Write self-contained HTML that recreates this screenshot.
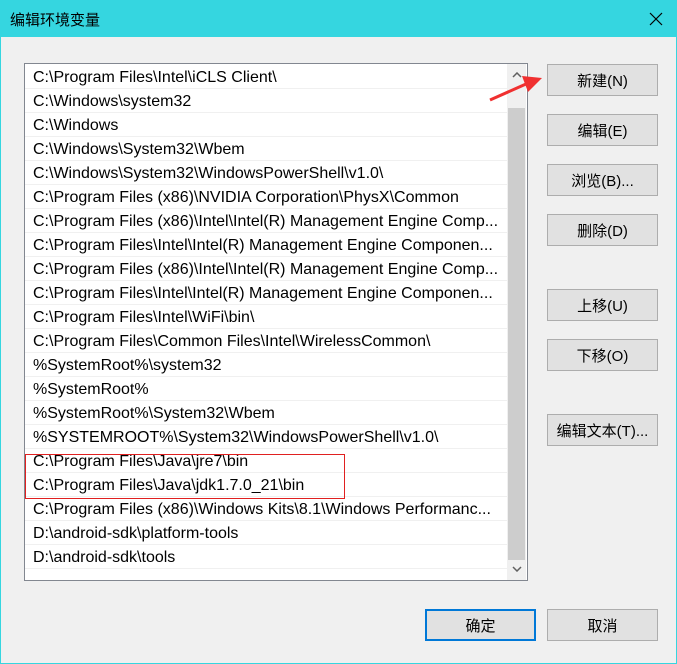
<!DOCTYPE html>
<html><head><meta charset="utf-8"><style>
*{margin:0;padding:0;box-sizing:border-box}
body{width:677px;height:664px;background:#f0f0f0;position:relative;overflow:hidden;font-family:"Liberation Sans","Noto Sans CJK SC",sans-serif;font-size:15px;color:#000}
.frame{position:absolute;left:0;top:0;width:677px;height:664px;border:1px solid #35d6e0}
.title{position:absolute;left:0;top:0;width:677px;height:37px;background:#35d6e0}
.title span{position:absolute;left:10px;top:9px;font-size:15px}
.list{position:absolute;left:24px;top:63px;width:504px;height:518px;background:#fff;border:1px solid #828790}
.row{position:absolute;left:0;width:482px;height:24px;border-bottom:1px solid #f0f0f0;padding-left:8px;line-height:26px;white-space:nowrap;overflow:hidden;font-size:16px}
.sb{position:absolute;left:482px;top:0;width:19px;height:516px;background:#f0f0f0}
.thumb{position:absolute;left:1px;top:44px;width:17px;height:452px;background:#cdcdcd}
.btn{position:absolute;width:111px;height:32px;background:#e1e1e1;border:1px solid #adadad;text-align:center;line-height:33px;font-size:15px}
.red{position:absolute;left:25px;top:454px;width:320px;height:45px;border:1px solid #e02020}
</style></head><body>
<div class="frame"></div>
<div class="title"><span>编辑环境变量</span>
<svg style="position:absolute;left:649px;top:12px" width="14" height="14"><path d="M1 1L13 13M13 1L1 13" stroke="#000" stroke-width="1.2"/></svg></div>
<div class="list">
<div class="row" style="top:1px">C:\Program Files\Intel\iCLS Client\</div>
<div class="row" style="top:25px">C:\Windows\system32</div>
<div class="row" style="top:49px">C:\Windows</div>
<div class="row" style="top:73px">C:\Windows\System32\Wbem</div>
<div class="row" style="top:97px">C:\Windows\System32\WindowsPowerShell\v1.0\</div>
<div class="row" style="top:121px">C:\Program Files (x86)\NVIDIA Corporation\PhysX\Common</div>
<div class="row" style="top:145px">C:\Program Files (x86)\Intel\Intel(R) Management Engine Comp...</div>
<div class="row" style="top:169px">C:\Program Files\Intel\Intel(R) Management Engine Componen...</div>
<div class="row" style="top:193px">C:\Program Files (x86)\Intel\Intel(R) Management Engine Comp...</div>
<div class="row" style="top:217px">C:\Program Files\Intel\Intel(R) Management Engine Componen...</div>
<div class="row" style="top:241px">C:\Program Files\Intel\WiFi\bin\</div>
<div class="row" style="top:265px">C:\Program Files\Common Files\Intel\WirelessCommon\</div>
<div class="row" style="top:289px">%SystemRoot%\system32</div>
<div class="row" style="top:313px">%SystemRoot%</div>
<div class="row" style="top:337px">%SystemRoot%\System32\Wbem</div>
<div class="row" style="top:361px">%SYSTEMROOT%\System32\WindowsPowerShell\v1.0\</div>
<div class="row" style="top:385px">C:\Program Files\Java\jre7\bin</div>
<div class="row" style="top:409px">C:\Program Files\Java\jdk1.7.0_21\bin</div>
<div class="row" style="top:433px">C:\Program Files (x86)\Windows Kits\8.1\Windows Performanc...</div>
<div class="row" style="top:457px">D:\android-sdk\platform-tools</div>
<div class="row" style="top:481px">D:\android-sdk\tools</div>
<div class="sb"><div class="thumb"></div>
<svg style="position:absolute;left:5px;top:8px" width="10" height="6"><path d="M1 5L5 1L9 5" stroke="#606060" stroke-width="1.5" fill="none"/></svg>
<svg style="position:absolute;left:5px;top:502px" width="10" height="6"><path d="M1 1L5 5L9 1" stroke="#606060" stroke-width="1.5" fill="none"/></svg>
</div>
</div>
<div class="red"></div>
<svg style="position:absolute;left:486px;top:70px" width="60" height="34"><path d="M4 30L40 14" stroke="#f03030" stroke-width="3"/><path d="M36 6L56 8L42 22Z" fill="#f03030"/></svg>
<div class="btn" style="left:547px;top:64px">新建(N)</div>
<div class="btn" style="left:547px;top:114px">编辑(E)</div>
<div class="btn" style="left:547px;top:164px">浏览(B)...</div>
<div class="btn" style="left:547px;top:214px">删除(D)</div>
<div class="btn" style="left:547px;top:289px">上移(U)</div>
<div class="btn" style="left:547px;top:339px">下移(O)</div>
<div class="btn" style="left:547px;top:414px">编辑文本(T)...</div>
<div class="btn" style="left:425px;top:609px;border:2px solid #0078d7;line-height:31px">确定</div>
<div class="btn" style="left:547px;top:609px">取消</div>
</body></html>
